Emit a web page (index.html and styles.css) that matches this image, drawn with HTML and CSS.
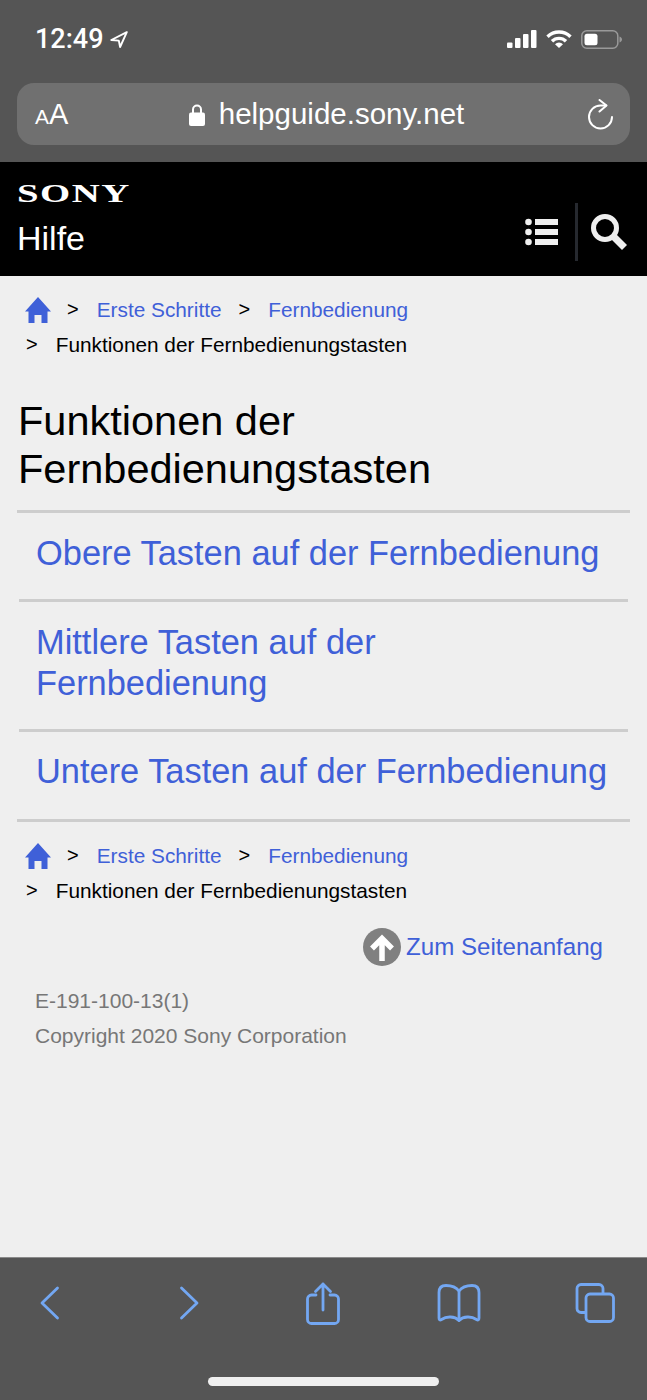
FILE: index.html
```html
<!DOCTYPE html>
<html lang="de">
<head>
  <meta charset="UTF-8">
  <meta name="viewport" content="width=device-width, initial-scale=1.0">
  <title>Funktionen der Fernbedienungstasten</title>
  <link rel="stylesheet" href="styles.css">
</head>
<body>

  <div class="browser-top">
    <div class="status-bar">
      <div class="status-left">
        <span class="time">12:49</span>
        <svg width="18" height="17" viewBox="0 0 18 17"><path d="M16.800 1.200 1.300 9l7.500.6 1.300 6.400z" fill="none" stroke="#fff" stroke-width="1.900" stroke-linejoin="round"/></svg>
      </div>
      <div class="status-right">
        <svg width="30" height="18" viewBox="0 0 30 18"><g fill="#fff"><rect x="0" y="12.500" width="5.500" height="5.500" rx="1"/><rect x="8" y="8" width="5.500" height="10" rx="1"/><rect x="16" y="4" width="5.500" height="14" rx="1"/><rect x="24" y="0" width="5.500" height="18" rx="1"/></g></svg>
        <svg width="26" height="18" viewBox="0 0 26 18"><g fill="none" stroke="#fff" stroke-width="3.400"><path d="M1.500 6.700a16.500 16.500 0 0 1 23 0"/><path d="M6 11.200a10 10 0 0 1 14 0"/></g><path d="M9 14.200a5.800 5.800 0 0 1 8 0l-4 3.800z" fill="#fff"/></svg>
        <svg width="41" height="19" viewBox="0 0 41 19"><rect x="0.800" y="0.800" width="36" height="17.400" rx="5" fill="none" stroke="#999" stroke-width="1.500"/><rect x="3.500" y="3.800" width="13" height="11.500" rx="2.500" fill="#fff"/><path d="M38.500 6.500v6c1.500-.5 2.500-1.700 2.500-3s-1-2.500-2.500-3z" fill="#999"/></svg>
      </div>
    </div>
    <div class="url-bar">
      <span class="text-size"><small>A</small>A</span>
      <div class="url">
        <svg width="16" height="23" viewBox="0 0 16 23"><path d="M4 10V6.500a4 4 0 0 1 8 0V10" fill="none" stroke="#fff" stroke-width="2"/><rect x="0" y="9.500" width="16" height="13.500" rx="2" fill="#fff"/></svg>
        <span>helpguide.sony.net</span>
      </div>
      <svg width="26" height="31" viewBox="0 0 26 31"><g fill="none" stroke="#fff" stroke-width="2" stroke-linecap="round" stroke-linejoin="round"><path d="M18 6.500h-5.500A11.500 11.500 0 1 0 24 18"/><path d="M11.500 1l7 5.500-7 6"/></g></svg>
    </div>
  </div>

  <header class="site-header">
    <div class="brand">
      <div class="sony">SONY</div>
      <div class="hilfe">Hilfe</div>
    </div>
    <div class="header-icons">
      <svg width="34" height="28" viewBox="0 0 34 28"><g fill="#efefef"><circle cx="3.500" cy="4" r="3.300"/><circle cx="3.500" cy="14" r="3.300"/><circle cx="3.500" cy="24" r="3.300"/><rect x="10" y="1" width="23" height="6"/><rect x="10" y="11" width="23" height="6"/><rect x="10" y="21" width="23" height="6"/></g></svg>
      <span class="divider"></span>
      <svg width="38" height="38" viewBox="0 0 38 38"><circle cx="15" cy="15" r="11.500" fill="none" stroke="#efefef" stroke-width="5"/><path d="M23 23l11.500 11.500" stroke="#efefef" stroke-width="7"/></svg>
    </div>
  </header>

  <main class="content">
    <nav class="crumbs">
      <div class="crumb-row">
        <svg width="26" height="26" viewBox="0 0 26 26"><path d="M13 0 26 14.500h-3.500V26h-6v-8h-7v8h-6V14.500H0z" fill="#3f60d8"/></svg>
        <span class="gt gt-first">&gt;</span>
        <a href="#">Erste Schritte</a>
        <span class="gt">&gt;</span>
        <a href="#">Fernbedienung</a>
      </div>
      <div class="crumb-row current">
        <span class="gt gt-last">&gt;</span>
        <span>Funktionen der Fernbedienungstasten</span>
      </div>
    </nav>

    <h1>Funktionen der Fernbedienungstasten</h1>

    <ul class="topics">
      <li><a href="#">Obere Tasten auf der Fernbedienung</a></li>
      <li><a href="#">Mittlere Tasten auf der Fernbedienung</a></li>
      <li><a href="#">Untere Tasten auf der Fernbedienung</a></li>
    </ul>

    <nav class="crumbs crumbs-bottom">
      <div class="crumb-row">
        <svg width="26" height="26" viewBox="0 0 26 26"><path d="M13 0 26 14.500h-3.500V26h-6v-8h-7v8h-6V14.500H0z" fill="#3f60d8"/></svg>
        <span class="gt gt-first">&gt;</span>
        <a href="#">Erste Schritte</a>
        <span class="gt">&gt;</span>
        <a href="#">Fernbedienung</a>
      </div>
      <div class="crumb-row current">
        <span class="gt gt-last">&gt;</span>
        <span>Funktionen der Fernbedienungstasten</span>
      </div>
    </nav>

    <a class="to-top" href="#">
      <svg width="38" height="38" viewBox="0 0 38 38"><circle cx="19" cy="19" r="19" fill="#808080"/><path d="M19 33V11M9 20.500l10-10 10 10" fill="none" stroke="#fff" stroke-width="5.500"/></svg>
      <span>Zum Seitenanfang</span>
    </a>

    <div class="legal">
      <p>E-191-100-13(1)</p>
      <p>Copyright 2020 Sony Corporation</p>
    </div>
  </main>

  <footer class="toolbar">
    <div class="tool-icons">
      <div class="tool">
        <svg width="20" height="34" viewBox="0 0 20 34"><path d="M17.500 2 2 17l15.500 15" fill="none" stroke="#73a7f2" stroke-width="2.800" stroke-linecap="round" stroke-linejoin="round"/></svg>
      </div>
      <div class="tool tool-forward">
        <svg width="20" height="34" viewBox="0 0 20 34"><path d="M2.500 2 18 17 2.500 32" fill="none" stroke="#73a7f2" stroke-width="2.800" stroke-linecap="round" stroke-linejoin="round"/></svg>
      </div>
      <div class="tool">
        <svg width="34" height="43" viewBox="0 0 34 43"><g fill="none" stroke="#73a7f2" stroke-width="2.800" stroke-linecap="round" stroke-linejoin="round"><path d="M10 13H5.500a4 4 0 0 0-4 4v20.500a4 4 0 0 0 4 4h23a4 4 0 0 0 4-4V17a4 4 0 0 0-4-4H24"/><path d="M17 28V2M9.500 9.500 17 2l7.500 7.500"/></g></svg>
      </div>
      <div class="tool">
        <svg width="44" height="38" viewBox="0 0 44 38"><g fill="none" stroke="#73a7f2" stroke-width="2.800" stroke-linecap="round" stroke-linejoin="round"><path d="M22 7C19 3 14 1.500 9 1.500 4.500 1.500 2 4 2 8.500V34c0 2 1 2.500 2.500 1.500 5-3.500 13-3.500 17.500 1 4.500-4.500 12.500-4.500 17.500-1 1.500 1 2.500.5 2.500-1.500V8.500c0-4.500-2.500-7-7-7-5 0-10 1.500-13 5.500z"/><path d="M22 7v29.500"/></g></svg>
      </div>
      <div class="tool">
        <svg width="40" height="40" viewBox="0 0 40 40"><g fill="none" stroke="#73a7f2" stroke-width="2.800" stroke-linejoin="round"><path d="M10 29.500H6a4 4 0 0 1-4-4V5.500a4 4 0 0 1 4-4h18a4 4 0 0 1 4 4V11"/><rect x="11" y="11" width="27.500" height="27.500" rx="4"/></g></svg>
      </div>
    </div>
    <div class="home-indicator"></div>
  </footer>

</body>
</html>
```

FILE: styles.css
```css
body {
  font-family: 'Liberation Sans', Arial, sans-serif;
  margin: 0;
  padding: 0;
  width: 647px;
  height: 1400px;
  display: flex;
  flex-direction: column;
  background-color: #efefef;
  overflow: hidden;
}
a {
  color: #3f60d8;
  text-decoration: none;
}

/* browser chrome */
.browser-top {
  height: 162px;
  box-sizing: border-box;
  background-color: #555;
  padding: 22px 17px 0;
  flex-shrink: 0;
}
.status-bar {
  height: 34px;
  display: flex;
  justify-content: space-between;
  align-items: center;
  padding: 0 8px 0 18px;
}
.status-left, .status-right {
  display: flex;
  align-items: center;
}
.status-right {
  gap: 9px;
}
.time {
  font-family: Roboto, 'Liberation Sans', sans-serif;
  font-weight: 500;
  color: #fff;
  font-size: 27px;
  margin-right: 6px;
}
.url-bar {
  margin-top: 27px;
  height: 62px;
  display: flex;
  align-items: center;
  justify-content: space-between;
  padding: 0 16px 0 18px;
  background-color: #707070;
  border-radius: 17px;
  color: #fff;
}
.text-size {
  font-size: 29px;
  width: 60px;
}
.text-size small {
  font-size: 21px;
}
.url {
  display: flex;
  align-items: center;
  gap: 14px;
  font-size: 29.500px;
  margin-right: 30px;
}

/* sony header */
.site-header {
  height: 114px;
  box-sizing: border-box;
  background-color: #000;
  color: #fff;
  display: flex;
  justify-content: space-between;
  padding: 0 19px 0 17px;
  flex-shrink: 0;
}
.sony {
  font-family: 'Liberation Serif', serif;
  font-weight: bold;
  font-size: 25.500px;
  line-height: 24px;
  letter-spacing: 1px;
  margin-top: 20px;
  transform: scaleX(1.52);
  transform-origin: left;
}
.hilfe {
  font-size: 34px;
  line-height: 40px;
  margin-top: 12px;
}
.header-icons {
  display: flex;
  align-items: center;
  height: 58px;
  margin-top: 41px;
}
.divider {
  width: 3px;
  height: 58px;
  background-color: #26292f;
  margin: 0 12px 0 16px;
}

/* page content */
.content {
  flex: 1;
  padding: 0 17px;
}
.crumbs {
  padding: 16px 0 0 8px;
  font-size: 20.800px;
}
.crumb-row {
  display: flex;
  align-items: center;
  height: 35px;
  white-space: nowrap;
}
.current {
  color: #000;
}
.gt {
  color: #000;
  margin: 0 18px 0 17px;
  font-size: 20px;
}
.gt-first {
  margin-left: 16px;
  margin-right: 18px;
}
.gt-last {
  margin: 0 18px 0 1px;
}
h1 {
  font-weight: normal;
  font-size: 41.500px;
  line-height: 48px;
  margin: 35px 0 0 1px;
  color: #000;
}
.topics {
  list-style: none;
  margin: 17px 0 0;
  padding: 0;
  border-top: 3px solid #cdcdcd;
}
.topics li {
  margin: 0 2px;
  padding: 20px 16px 24px 17px;
  font-size: 34.400px;
  line-height: 41.500px;
  border-bottom: 3px solid #cdcdcd;
}
.topics li:last-child {
  margin: 0;
  padding: 19px 18px 27px 19px;
}
.crumbs-bottom {
  padding-top: 16px;
}
.to-top {
  display: flex;
  align-items: center;
  justify-content: flex-end;
  gap: 5px;
  margin: 20px 27px 0 0;
  font-size: 24.100px;
}
.legal {
  margin: 17px 0 0 18px;
  color: #777;
  font-size: 21px;
}
.legal p {
  margin: 0;
  line-height: 35px;
}

/* bottom toolbar */
.toolbar {
  height: 143px;
  box-sizing: border-box;
  background-color: #555;
  border-top: 1px solid #8a8a8a;
  flex-shrink: 0;
}
.tool-icons {
  display: flex;
  align-items: center;
  justify-content: space-between;
  height: 90px;
  padding: 0 22px 0 20px;
}
.tool {
  width: 60px;
  display: flex;
  justify-content: center;
}
.tool-forward svg {
  margin-left: 6px;
}
.home-indicator {
  width: 231px;
  height: 9px;
  border-radius: 5px;
  background-color: #efefef;
  margin: 29px auto 0;
}
```
